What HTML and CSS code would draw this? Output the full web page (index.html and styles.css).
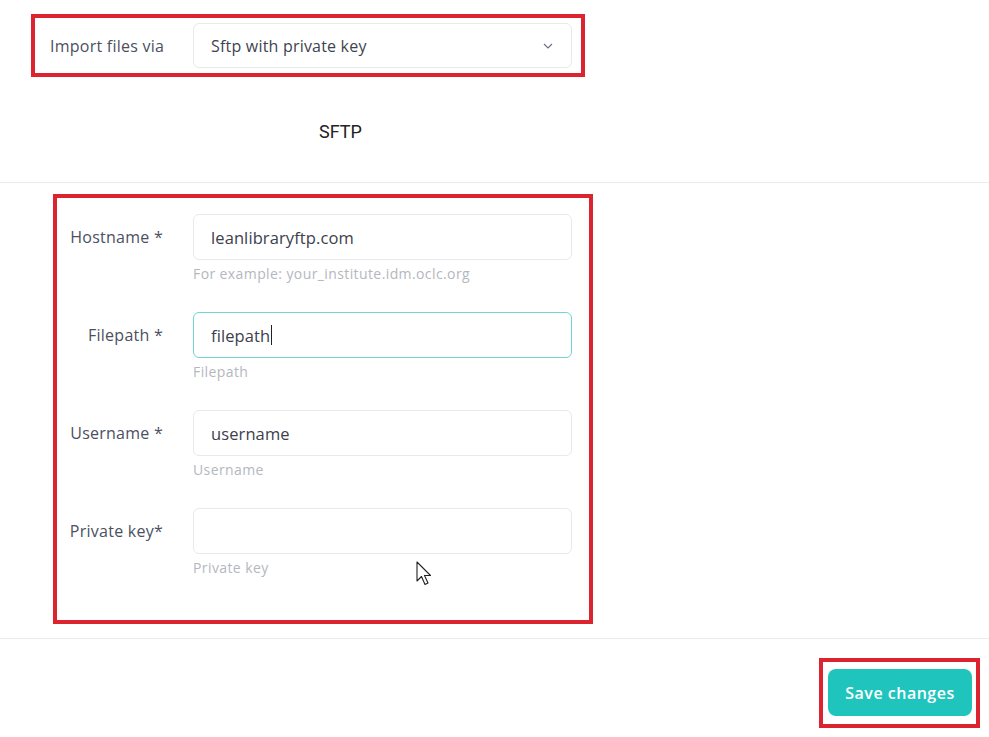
FILE: index.html
```html
<!DOCTYPE html>
<html>
<head>
<meta charset="utf-8">
<link rel="stylesheet" href="styles.css">
</head>
<body>
<div class="page">
  <div class="import-box">
    <span class="import-label">Import files via</span>
    <div class="select">
      <span>Sftp with private key</span>
      <svg class="chev" width="10" height="6" viewBox="0 0 10 6"><path d="M1 1l4 4 4-4" fill="none" stroke="#6b7280" stroke-width="1.2"/></svg>
    </div>
  </div>

  <div class="heading-row"><h2 class="heading">SFTP</h2></div>

  <div class="divider"></div>

  <div class="form-box">
    <div class="row">
      <label class="label">Hostname *</label>
      <div class="field">
        <div class="input">leanlibraryftp.com</div>
        <div class="help">For example: your_institute.idm.oclc.org</div>
      </div>
    </div>
    <div class="row">
      <label class="label">Filepath *</label>
      <div class="field">
        <div class="input focused">filepath<span class="caret"></span></div>
        <div class="help">Filepath</div>
      </div>
    </div>
    <div class="row">
      <label class="label">Username *</label>
      <div class="field">
        <div class="input">username</div>
        <div class="help">Username</div>
      </div>
    </div>
    <div class="row">
      <label class="label">Private key*</label>
      <div class="field">
        <div class="input"></div>
        <div class="help">Private key</div>
      </div>
    </div>
    <svg class="pointer" width="20" height="28" viewBox="0 0 20 28"><path d="M1 1 L1 20 L5.5 15.5 L9 23.5 L12 22 L8.5 14.5 L14.5 14.5 Z" fill="#fff" stroke="#222" stroke-width="1.1" stroke-linejoin="round"/></svg>
  </div>

  <div class="divider bottom"></div>

  <div class="actions">
    <div class="save-box"><button class="save">Save changes</button></div>
  </div>
</div>
</body>
</html>
```

FILE: styles.css
```css
* { box-sizing: border-box; }
html, body { margin: 0; padding: 0; background: #fff; }
body { font-family: "Open Sans", "DejaVu Sans", sans-serif; color: #4b5060; }
.page { width: 989px; height: 737px; overflow: hidden; padding-top: 14px; }

.import-box {
  margin-left: 31px;
  width: 554px;
  height: 63px;
  border: 4px solid #dc2430;
  display: flex;
  align-items: center;
  padding-left: 15px;
}
.import-label { width: 143px; font-size: 16px; letter-spacing: 0.25px; color: #4b5060; }
.select {
  width: 379px;
  height: 45px;
  border: 1px solid #e8e9ec;
  border-radius: 6px;
  display: flex;
  align-items: center;
  justify-content: space-between;
  padding: 0 18px 0 17px;
  font-size: 16px;
  letter-spacing: 0.2px;
  color: #3f4350;
}
.chev { margin-top: 1px; }

.heading-row { height: 105px; display: flex; justify-content: flex-start; }
.heading {
  margin: 44px 0 0 319px;
  font-family: Roboto, sans-serif;
  font-weight: 400;
  font-size: 18px;
  color: #222;
  line-height: 22px;
}
.divider { height: 1px; background: #ececee; }
.divider.bottom { margin-top: 14px; }

.form-box {
  position: relative;
  margin: 11px 0 0 53px;
  width: 540px;
  height: 430px;
  border: 4px solid #dc2430;
  padding: 16px 17px 0 0;
  display: flex;
  flex-direction: column;
  gap: 27px;
}
.row { display: flex; align-items: flex-start; }
.label {
  width: 106px;
  margin-right: 30px;
  height: 45px;
  display: flex;
  align-items: center;
  justify-content: flex-end;
  font-size: 16px;
  letter-spacing: 0.25px;
  color: #4b5060;
}
.field { width: 379px; }
.input {
  height: 46px;
  border: 1px solid #e8e9ec;
  border-radius: 6px;
  display: flex;
  align-items: center;
  padding-left: 17px;
  font-size: 16.5px;
  letter-spacing: 0.1px;
  color: #3c404c;
}
.input.focused { border-color: #6dd6cf; }
.caret { display: inline-block; width: 1px; height: 20px; background: #222; margin-left: 1px; }
.help { margin-top: 3px; height: 22px; line-height: 22px; font-size: 14px; letter-spacing: 0.4px; color: #b4b7be; }
.pointer { position: absolute; left: 359px; top: 363px; }

.actions { display: flex; justify-content: flex-end; padding: 19px 9px 0 0; }
.save-box { width: 161px; height: 70px; border: 4px solid #dc2430; padding: 7px 4px 0 5px; }
.save {
  width: 144px;
  height: 47px;
  border: none;
  border-radius: 8px;
  background: #1fc5bd;
  color: #fff;
  font-family: "Open Sans", sans-serif;
  font-weight: 600;
  font-size: 16px;
  letter-spacing: 0.5px;
}
```
